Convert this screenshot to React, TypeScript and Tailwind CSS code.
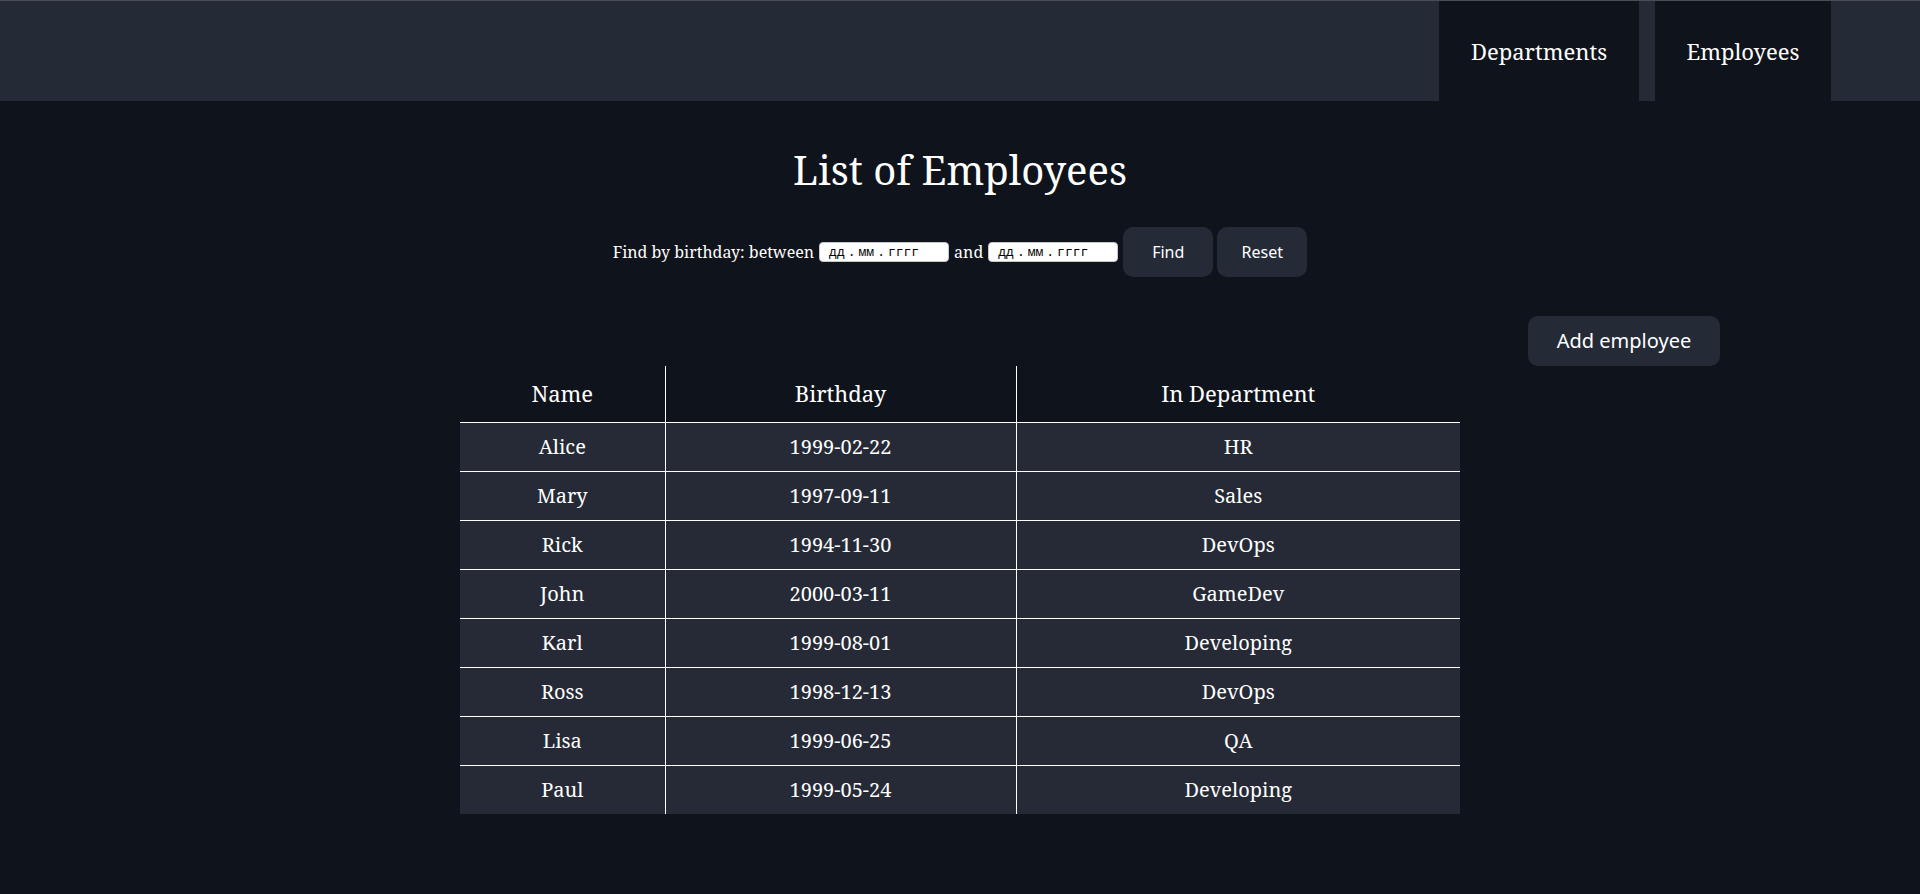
import React from "react";

const serif = "font-['Noto_Serif','DejaVu_Serif',serif]";

const rows = [
  ["Alice", "1999-02-22", "HR"],
  ["Mary", "1997-09-11", "Sales"],
  ["Rick", "1994-11-30", "DevOps"],
  ["John", "2000-03-11", "GameDev"],
  ["Karl", "1999-08-01", "Developing"],
  ["Ross", "1998-12-13", "DevOps"],
  ["Lisa", "1999-06-25", "QA"],
  ["Paul", "1999-05-24", "Developing"],
];

function DateBox() {
  return (
    <span className="inline-flex items-center h-[20px] w-[130px] bg-white rounded-[4px] border border-[#c8c8c8] pl-[9px] text-[13px] text-black font-['Liberation_Mono','DejaVu_Sans_Mono',monospace] leading-none">
      <span>дд</span>
      <span className="mx-[3px]">.</span>
      <span>мм</span>
      <span className="mx-[3px]">.</span>
      <span>гггг</span>
    </span>
  );
}

export default function App() {
  return (
    <div className={`min-h-[894px] bg-[#0f131b] text-white ${serif}`}>
      <header className="h-[101px] bg-[#252a37] border-t border-[#4a4d53] flex justify-end gap-4 pr-[89px]">
        <div className="w-[200px] h-full bg-[#0f131b] flex items-center justify-center text-[22px]">Departments</div>
        <div className="w-[176px] h-full bg-[#0f131b] flex items-center justify-center text-[22px]">Employees</div>
      </header>
      <h1 className="text-center text-[40px] leading-none mt-[49px]">List of Employees</h1>
      <div className="flex justify-center items-center mt-[37px] text-[16px]">
        <span>Find by birthday: between</span>
        <span className="ml-[5px] flex"><DateBox /></span>
        <span className="mx-[5px]">and</span>
        <DateBox />
        <button className="ml-[5px] w-[90px] h-[50px] bg-[#252a37] rounded-[10px] font-['Noto_Sans',sans-serif] text-[16px]">Find</button>
        <button className="ml-[4px] w-[90px] h-[50px] bg-[#252a37] rounded-[10px] font-['Noto_Sans',sans-serif] text-[16px]">Reset</button>
      </div>
      <div className="flex justify-end pr-[200px] mt-[39px]">
        <button className="w-[192px] h-[50px] bg-[#252a37] rounded-[10px] font-['Noto_Sans',sans-serif] text-[20px]">Add employee</button>
      </div>
      <div className="flex justify-center">
        <table className="w-[1000px] border-collapse">
          <thead>
            <tr className="h-[56px] text-[22px]">
              <th className="w-[205px] font-normal border-r border-b border-white">Name</th>
              <th className="w-[351px] font-normal border-r border-b border-white">Birthday</th>
              <th className="font-normal border-b border-white">In Department</th>
            </tr>
          </thead>
          <tbody>
            {rows.map((r, i) => (
              <tr key={i} className={`h-[49px] bg-[#252a36] text-[20px] ${i < rows.length - 1 ? "border-b border-white" : ""}`}>
                <td className="text-center border-r border-white">{r[0]}</td>
                <td className="text-center border-r border-white">{r[1]}</td>
                <td className="text-center">{r[2]}</td>
              </tr>
            ))}
          </tbody>
        </table>
      </div>
    </div>
  );
}
